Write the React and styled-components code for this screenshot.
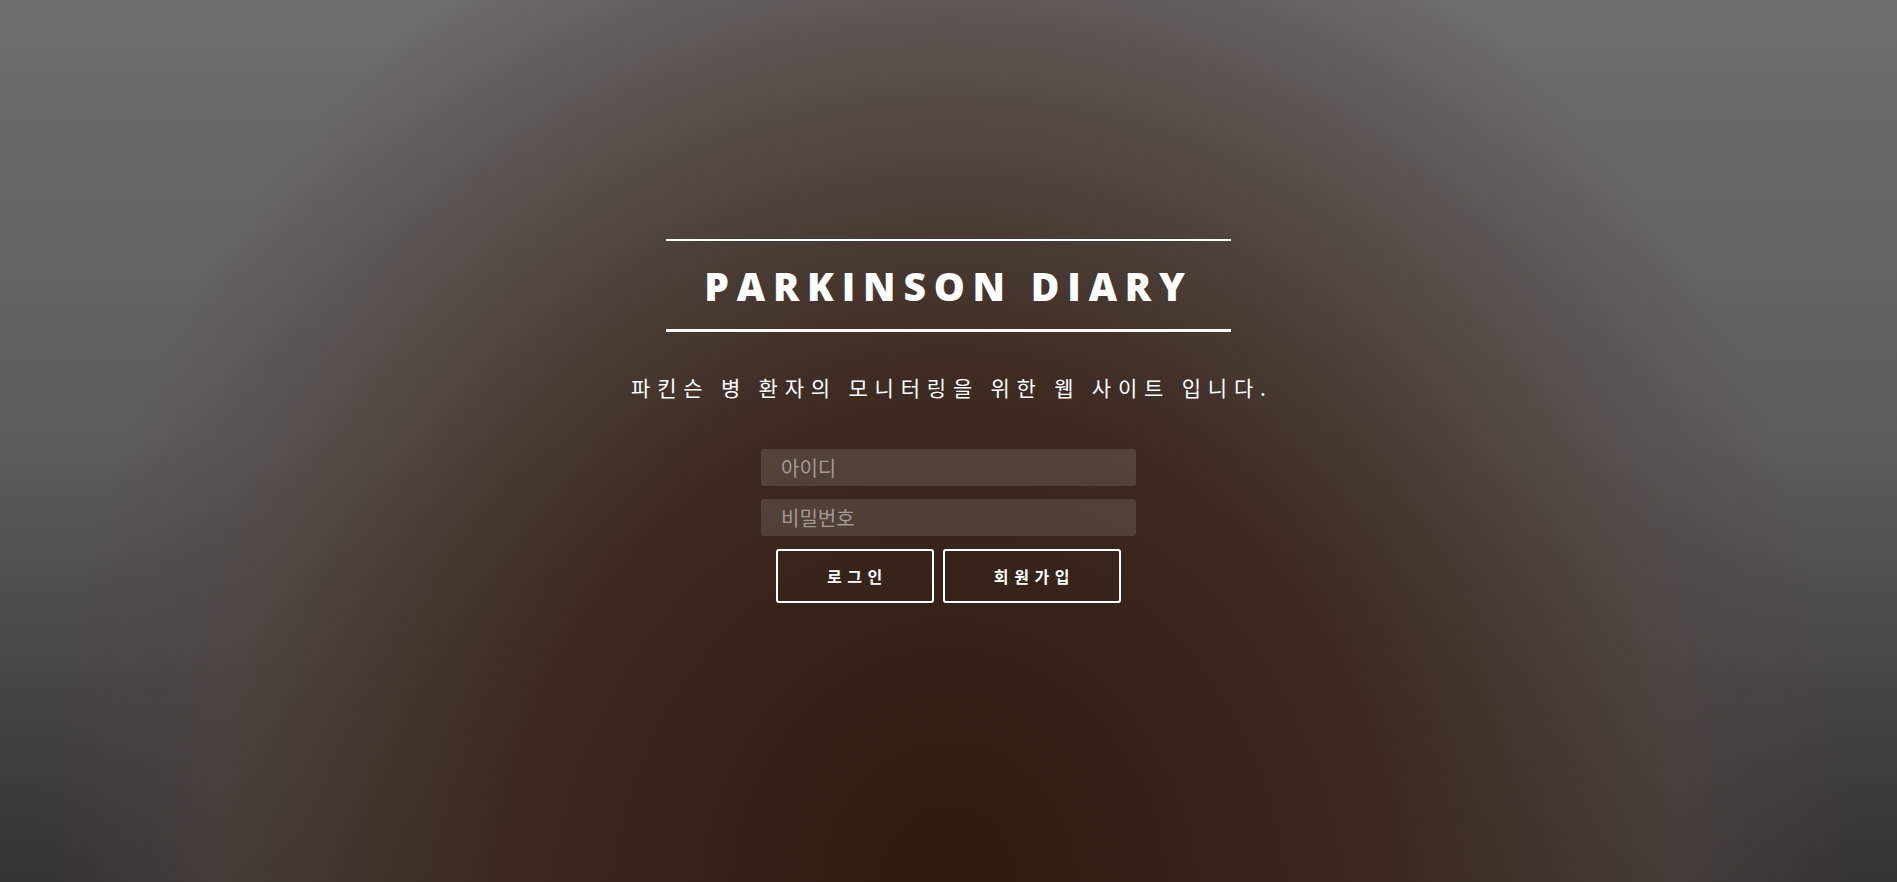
import React from "react";
import styled, { createGlobalStyle } from "styled-components";

const Global = createGlobalStyle`
  html, body { margin: 0; padding: 0; height: 100%; }
  body { font-family: "Open Sans", "Noto Sans CJK KR", sans-serif; }
  * { box-sizing: border-box; }
`;

const Page = styled.main`
  width: 100%;
  height: 100vh;
  overflow: hidden;
  display: flex;
  flex-direction: column;
  align-items: center;
  padding-top: 239px;
  background:
    radial-gradient(ellipse 48% 120% at 50% 100%, rgba(44,26,15,1) 0%, rgba(58,38,28,0.95) 45%, rgba(80,66,60,0.6) 80%, rgba(90,88,88,0) 100%),
    linear-gradient(to bottom, #6d6d6d 0%, #5c5c5c 50%, #333333 100%);
`;

const TitleBox = styled.div`
  width: 565px;
  border-top: 2px solid #fff;
  border-bottom: 3px solid #fff;
  display: flex;
  justify-content: center;
  padding: 22px 0 20px;
`;

const Title = styled.h1`
  margin: 0;
  font-family: "Open Sans", sans-serif;
  font-weight: 800;
  font-size: 39px;
  line-height: 46px;
  letter-spacing: 7.8px;
  color: #fff;
`;

const Subtitle = styled.p`
  margin: 41px 0 0;
  font-family: "Noto Sans CJK KR", sans-serif;
  font-size: 21px;
  line-height: 28px;
  letter-spacing: 6.8px;
  margin-right: -6.8px;
  color: #fff;
`;

const Form = styled.form`
  margin-top: 48px;
  display: flex;
  flex-direction: column;
  align-items: center;
  gap: 13px;
`;

const Input = styled.input`
  width: 375px;
  height: 37px;
  border: none;
  border-radius: 3px;
  background: rgba(255, 255, 255, 0.12);
  padding: 0 20px;
  font-family: "Noto Sans CJK KR", sans-serif;
  font-size: 20px;
  color: #fff;
  outline: none;
  &::placeholder { color: #a39a93; }
`;

const Buttons = styled.div`
  display: flex;
  gap: 9px;
`;

const Button = styled.button`
  height: 54px;
  padding: 0 44px 0 49px;
  border: 2px solid #fff;
  border-radius: 3px;
  background: transparent;
  color: #fff;
  font-family: "Noto Sans CJK KR", sans-serif;
  font-weight: 700;
  font-size: 16px;
  letter-spacing: 5.6px;
  cursor: pointer;
`;

export default function App() {
  return (
    <>
      <Global />
      <Page>
        <TitleBox>
          <Title>PARKINSON DIARY</Title>
        </TitleBox>
        <Subtitle>파킨슨 병 환자의 모니터링을 위한 웹 사이트 입니다.</Subtitle>
        <Form onSubmit={(e) => e.preventDefault()}>
          <Input placeholder="아이디" />
          <Input type="password" placeholder="비밀번호" />
          <Buttons>
            <Button type="submit">로그인</Button>
            <Button type="button">회원가입</Button>
          </Buttons>
        </Form>
      </Page>
    </>
  );
}
